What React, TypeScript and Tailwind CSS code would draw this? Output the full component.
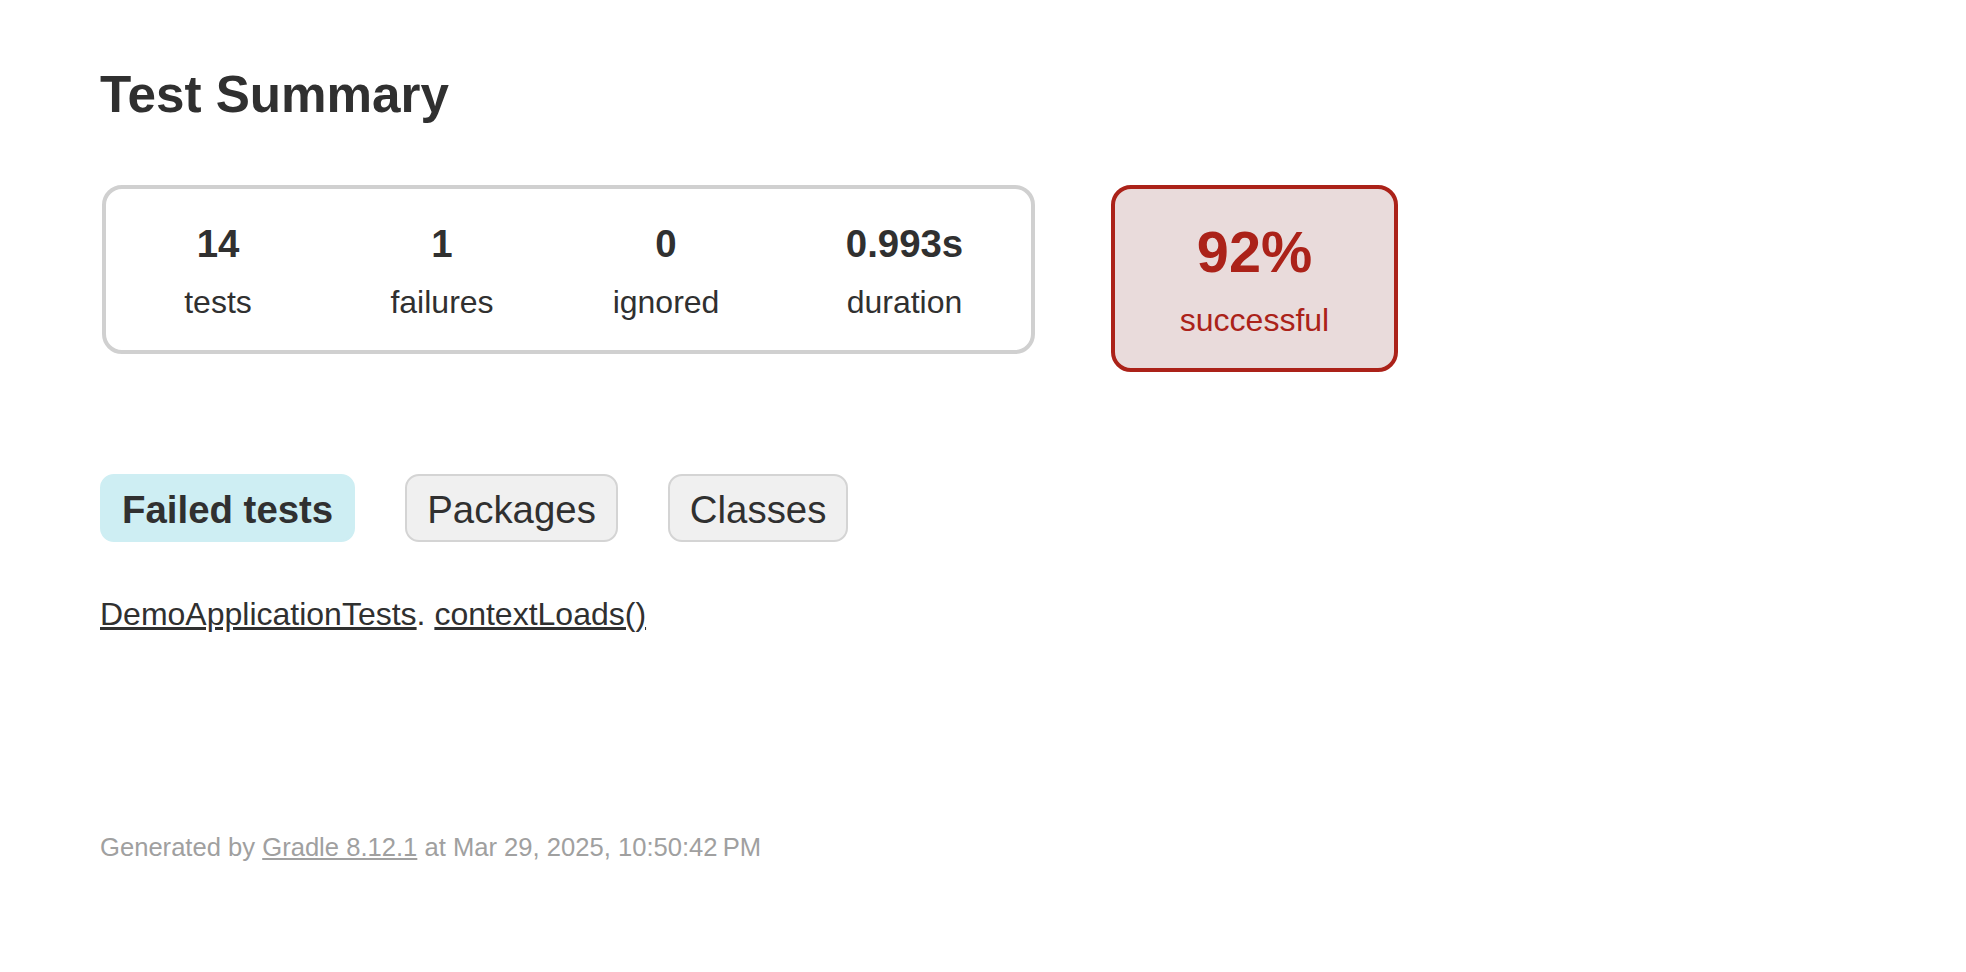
import React from "react"

type Stat = {
  value: string
  label: string
  width: string
}

const stats: Stat[] = [
  { value: "14", label: "tests", width: "w-[224px]" },
  { value: "1", label: "failures", width: "w-[224px]" },
  { value: "0", label: "ignored", width: "w-[224px]" },
  { value: "0.993s", label: "duration", width: "w-[253px]" },
]

const tabs = [
  { label: "Failed tests", selected: true },
  { label: "Packages", selected: false },
  { label: "Classes", selected: false },
]

export default function App() {
  return (
    <div className="min-h-screen bg-white text-[#303030] font-['Liberation_Sans',Helvetica,Arial,sans-serif] px-[100px] pt-[65px]">
      <h1 className="m-0 text-[51.2px] font-bold leading-[normal] whitespace-nowrap">
        Test Summary
      </h1>

      {/* Summary */}
      <div className="mt-[61px] flex items-start">
        <div className="ml-[2px] flex rounded-[20px] border-4 border-[#d0d0d0]">
          {stats.map((stat) => (
            <div
              key={stat.label}
              className={`${stat.width} pt-[33px] pb-[29px] text-center`}
            >
              <div className="mb-[18px] text-[38.4px] font-bold leading-[normal]">
                {stat.value}
              </div>
              <p className="m-0 text-[32px] leading-[normal]">{stat.label}</p>
            </div>
          ))}
        </div>

        <div className="ml-[76px] w-[287px] rounded-[20px] border-4 border-[#ab2219] bg-[#e9dbdb] pt-[30px] pb-[29px] text-center text-[#ab2219]">
          <div className="mb-[17px] text-[57.6px] font-bold leading-[normal]">
            92%
          </div>
          <p className="m-0 text-[32px] leading-[normal]">successful</p>
        </div>
      </div>

      {/* Tabs */}
      <ul className="mt-[102px] flex list-none p-0">
        {tabs.map((tab) => (
          <li
            key={tab.label}
            className={
              tab.selected
                ? "mr-[50px] rounded-[14px] border-2 border-[#ceeef3] bg-[#ceeef3] px-[20px] pt-[12px] pb-[8px]"
                : "mr-[50px] rounded-[14px] border-2 border-[#d4d4d4] bg-[#f0f0f0] px-[20px] pt-[12px] pb-[8px]"
            }
          >
            <a
              href="#"
              className={`block text-[38.4px] leading-[normal] text-[#303030] no-underline ${
                tab.selected ? "font-bold" : ""
              }`}
            >
              {tab.label}
            </a>
          </li>
        ))}
      </ul>

      {/* Failed tests */}
      <ul className="mt-[54px] list-none p-0 text-[32px] leading-[normal]">
        <li>
          <a href="#" className="text-[#303030] underline">
            DemoApplicationTests
          </a>
          .{" "}
          <a href="#" className="text-[#303030] underline">
            contextLoads()
          </a>
        </li>
      </ul>

      <div className="mt-[200px] whitespace-nowrap text-[25.6px] leading-[normal] text-[#a0a0a0]">
        Generated by{" "}
        <a href="#" className="text-[#a0a0a0] underline">
          Gradle 8.12.1
        </a>{" "}
        at Mar 29, 2025, 10:50:42{"\u202F"}PM
      </div>
    </div>
  )
}
